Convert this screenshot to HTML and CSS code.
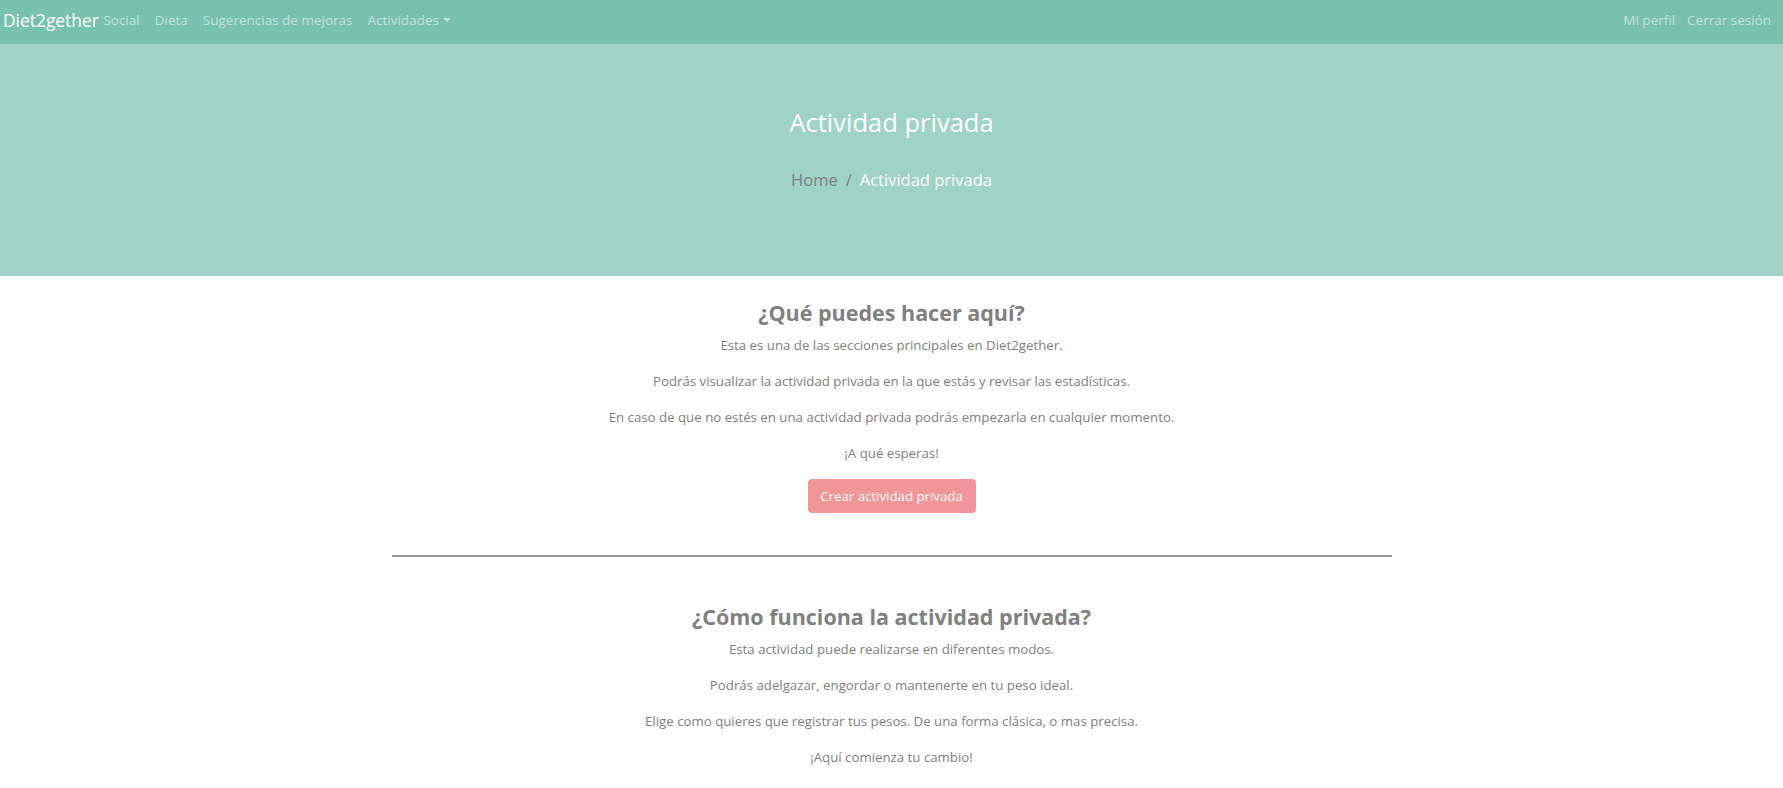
FILE: index.html
```html
<!DOCTYPE html>
<html lang="es">
<head>
<meta charset="utf-8">
<title>Actividad privada</title>
<link rel="stylesheet" href="styles.css">
</head>
<body>
<nav class="navbar">
  <div class="nav-left">
    <a class="brand" href="#">Diet2gether</a>
    <a class="nav-link" href="#">Social</a>
    <a class="nav-link" href="#">Dieta</a>
    <a class="nav-link" href="#">Sugerencias de mejoras</a>
    <a class="nav-link dropdown" href="#">Actividades<span class="caret"></span></a>
  </div>
  <div class="nav-right">
    <a class="nav-link" href="#">Mi perfil</a>
    <a class="nav-link" href="#">Cerrar sesión</a>
  </div>
</nav>
<header class="hero">
  <h1 class="hero-title">Actividad privada</h1>
  <ol class="breadcrumb">
    <li class="crumb-home">Home</li>
    <li class="crumb-sep">/</li>
    <li class="crumb-active">Actividad privada</li>
  </ol>
</header>
<main class="content">
  <section class="info first">
    <h2 class="info-title">¿Qué puedes hacer aquí?</h2>
    <p>Esta es una de las secciones principales en Diet2gether.</p>
    <p>Podrás visualizar la actividad privada en la que estás y revisar las estadísticas.</p>
    <p>En caso de que no estés en una actividad privada podrás empezarla en cualquier momento.</p>
    <p>¡A qué esperas!</p>
    <button class="btn-create">Crear actividad privada</button>
  </section>
  <hr class="divider">
  <section class="info second">
    <h2 class="info-title">¿Cómo funciona la actividad privada?</h2>
    <p>Esta actividad puede realizarse en diferentes modos.</p>
    <p>Podrás adelgazar, engordar o mantenerte en tu peso ideal.</p>
    <p>Elige como quieres que registrar tus pesos. De una forma clásica, o mas precisa.</p>
    <p>¡Aquí comienza tu cambio!</p>
  </section>
</main>
</body>
</html>
```

FILE: styles.css
```css
* { box-sizing: border-box; }
html, body { margin: 0; padding: 0; }
body {
  font-family: "Open Sans", "Noto Sans", sans-serif;
  color: #808080;
  background: #fff;
  overflow: hidden;
}
a { text-decoration: none; }

.navbar {
  height: 44px;
  background: #77c1ad;
  display: flex;
  align-items: center;
  justify-content: space-between;
  padding: 0 6px 4px 3px;
}
.nav-left, .nav-right { display: flex; align-items: center; }
.brand {
  color: #fff;
  font-size: 17.4px;
  margin-right: 0;
}
.nav-link {
  color: rgba(255,255,255,0.55);
  font-size: 13.5px;
  padding: 0 7.5px;
}
.brand + .nav-link { padding-left: 4.5px; }
.nav-right .nav-link { padding: 0 6px; }
.caret {
  display: inline-block;
  margin-left: 4px;
  vertical-align: 3px;
  border-top: 4px solid rgba(255,255,255,0.55);
  border-left: 4px solid transparent;
  border-right: 4px solid transparent;
}

.hero {
  height: 232px;
  background: #9ed3c5;
  display: flex;
  flex-direction: column;
  align-items: center;
  padding-top: 60px;
}
.hero-title {
  margin: 0;
  color: #fff;
  font-weight: 400;
  font-size: 25.5px;
  line-height: 36px;
}
.breadcrumb {
  list-style: none;
  margin: 28px 0 0;
  padding: 0;
  display: flex;
  gap: 8px;
  font-size: 16.5px;
  line-height: 24px;
}
.crumb-home { color: #808080; }
.crumb-sep { color: #808080; }
.crumb-active { color: #fff; }

.content {
  display: flex;
  flex-direction: column;
  align-items: center;
}
.info {
  display: flex;
  flex-direction: column;
  align-items: center;
  text-align: center;
}
.info.first { padding-top: 22px; }
.info-title {
  margin: 0 0 7px;
  font-size: 21.5px;
  line-height: 30px;
  font-weight: 700;
  color: #808080;
}
.info p {
  margin: 0 0 16px;
  font-size: 13.25px;
  line-height: 20px;
}
.btn-create {
  margin-top: 0;
  width: 168px;
  height: 34px;
  border: none;
  border-radius: 4px;
  background: #f19698;
  color: #fff;
  font-family: inherit;
  font-size: 13.25px;
}
.divider {
  width: 1000px;
  margin: 42px 0 45px;
  border: none;
  border-top: 2px solid #999;
  height: 0;
}
```
